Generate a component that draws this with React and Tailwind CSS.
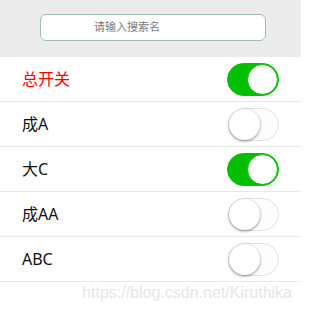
import React from "react";

const rows = [
  { label: "总开关", on: true, red: true },
  { label: "成A", on: false },
  { label: "大C", on: true },
  { label: "成AA", on: false },
  { label: "ABC", on: false },
];

function Toggle({ on }) {
  return on ? (
    <div className="relative w-[52px] h-[33px] rounded-full bg-[#04be02] border border-[#04be02]">
      <div className="absolute right-0 top-0 w-[31px] h-[31px] rounded-full bg-white border border-[#04be02]" />
    </div>
  ) : (
    <div className="relative w-[51px] h-[33px] rounded-full bg-[#fdfdfd] border border-[#d9e9d9]">
      <div className="absolute left-0 top-0 w-[31px] h-[31px] rounded-full bg-white shadow-[0_1px_3px_rgba(0,0,0,0.45)]" />
    </div>
  );
}

export default function App() {
  return (
    <div
      className="w-[301px] h-[312px] bg-white flex flex-col"
      style={{ fontFamily: '"Noto Sans", "Noto Sans CJK SC", sans-serif' }}
    >
      <div className="h-[57px] bg-[#ececec] pt-[14px] pl-[40px]">
        <div className="w-[226px] h-[27px] rounded-[6px] border border-[#9dbfba] bg-white flex items-center pl-[53px] text-[11px] text-[#7a7a7a]">
          请输入搜索名
        </div>
      </div>
      {rows.map((r) => (
        <div
          key={r.label}
          className="h-[45px] border-b border-[#e8e8e8] flex items-center justify-between pl-[22px] pr-[22px]"
        >
          <span className={`text-[16px] ${r.red ? "text-[#ff0000]" : "text-[#111]"}`}>
            {r.label}
          </span>
          <Toggle on={r.on} />
        </div>
      ))}
      <div
        className="flex justify-end pr-[9px] pt-[1px] text-[16px] text-[#e6e6e6] leading-[20px]"
        style={{ fontFamily: '"Liberation Sans", Arial, sans-serif' }}
      >
        https://blog.csdn.net/Kiruthika
      </div>
    </div>
  );
}
